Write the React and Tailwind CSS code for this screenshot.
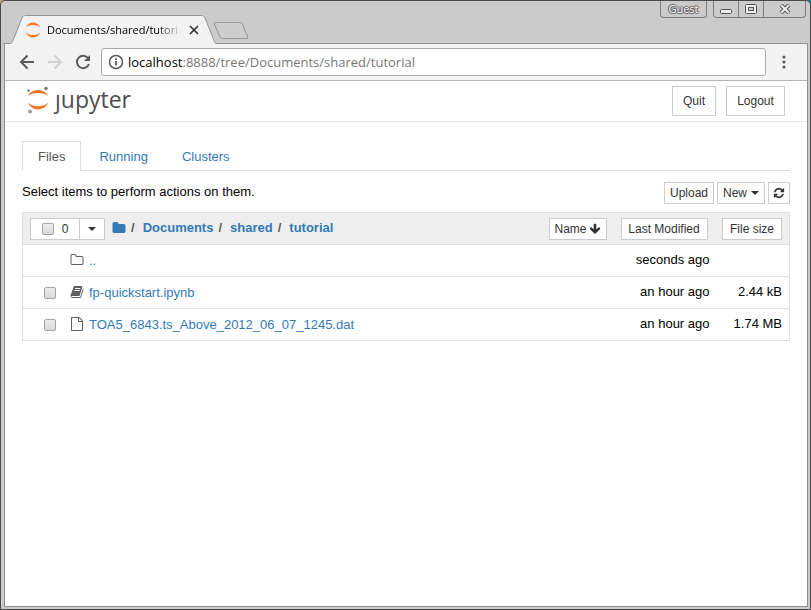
import React from "react";

const FA = {
  folder: "M1728 608v704q0 92-66 158t-158 66h-1216q-92 0-158-66t-66-158v-960q0-92 66-158t158-66h320q92 0 158 66t66 158v32h672q92 0 158 66t66 158z",
  folderOpen: "M1600 1312v-704q0-40-28-68t-68-28h-704q-40 0-68-28t-28-68v-64q0-40-28-68t-68-28h-320q-40 0-68 28t-28 68v960q0 40 28 68t68 28h1216q40 0 68-28t28-68zm128-704v704q0 92-66 158t-158 66h-1216q-92 0-158-66t-66-158v-960q0-92 66-158t158-66h320q92 0 158 66t66 158v32h672q92 0 158 66t66 158z",
  refresh: "M1639 1056q0 5-1 7-64 268-268 434.5t-478 166.5q-146 0-282.5-55t-243.5-157l-129 129q-19 19-45 19t-45-19-19-45v-448q0-26 19-45t45-19h448q26 0 45 19t19 45-19 45l-137 137q71 66 161 102t187 36q134 0 250-65t186-179q11-17 53-117 8-23 30-23h192q13 0 22.5 9.5t9.5 22.5zm25-800v448q0 26-19 45t-45 19h-448q-26 0-45-19t-19-45 19-45l138-138q-148-137-349-137-134 0-250 65t-186 179q-11 17-53 117-8 23-30 23h-199q-13 0-22.5-9.5t-9.5-22.5v-7q65-268 270-434.5t480-166.5q146 0 284 55.5t245 156.5l130-129q19-19 45-19t45 19 19 45z",
  arrowDown: "M1675 832q0 53-37 90l-651 652q-39 37-91 37-53 0-90-37l-651-652q-38-36-38-90 0-53 38-91l74-75q39-37 91-37 53 0 90 37l294 294v-704q0-52 38-90t90-38h128q52 0 90 38t38 90v704l294-294q37-37 90-37 52 0 91 37l75 75q37 39 37 91z",
  file: "M1596 380q28 28 48 76t20 88v1152q0 40-28 68t-68 28h-1344q-40 0-68-28t-28-68v-1600q0-40 28-68t68-28h896q40 0 88 20t76 48zm-444-244v376h376q-10-29-22-41l-313-313q-12-12-41-22zm384 1528v-1024h-416q-40 0-68-28t-28-68v-416h-768v1536h1280z",
  book: "M1703 478q40 57 18 129l-275 906q-19 64-76.5 107.5t-122.5 43.5h-923q-77 0-148.5-53.5t-99.5-131.5q-24-67-2-127 0-4 3-27t4-37q1-8-3-21.5t-3-19.5q2-11 8-21t16.5-23.5 16.5-23.5q23-38 45-91.5t30-91.5q3-10 .5-30t-.5-28q3-11 17-28t17-23q21-36 42-92t25-90q1-9-2.5-32t.5-28q4-13 22-30.5t22-22.5q19-26 42.5-84.5t27.5-96.5q1-8-3-25.5t-2-26.5q2-8 9-18t18-23 17-21q8-12 16.5-30.5t15-35 16-36 19.5-32 26.5-23.5 36-11.5 47.5 5.5l-1 3q38-9 51-9h761q74 0 114 56t18 130l-274 906q-36 119-71.5 153.5t-128.5 34.5h-869q-27 0-38 15-11 16-1 43 24 70 144 70h923q29 0 56-15.5t35-41.5l300-987q7-22 5-57 38 15 59 43zm-1064 2q-4 13 2 22.5t20 9.5h608q13 0 25.5-9.5t16.5-22.5l21-64q4-13-2-22.5t-20-9.5h-608q-13 0-25.5 9.5t-16.5 22.5zm-83 256q-4 13 2 22.5t20 9.5h608q13 0 25.5-9.5t16.5-22.5l21-64q4-13-2-22.5t-20-9.5h-608q-13 0-25.5 9.5t-16.5 22.5z",
};

function Icon({ name, className = "size-[14px]" }) {
  return (
    <svg viewBox="0 0 1792 1792" className={`shrink-0 ${className}`} fill="currentColor" aria-hidden="true">
      <path d={FA[name]} />
    </svg>
  );
}

function Caret() {
  return (
    <svg viewBox="0 0 8 4" className="h-1 w-2 shrink-0" fill="currentColor" aria-hidden="true">
      <path d="M0 0h8L4 4z" />
    </svg>
  );
}

function Crescents({ className }) {
  return (
    <svg viewBox="0 0 16 16" className={className} fill="#f37726" aria-hidden="true">
      <path d="M.8 5.600C2 2.700 4.800.6 8 .6s6 2.100 7.200 5C13.800 4.100 11.200 3 8 3S2.200 4.100.8 5.600z" />
      <path d="M.8 10.400C2 13.300 4.800 15.400 8 15.400s6-2.100 7.200-5C13.800 11.900 11.200 13 8 13S2.200 11.900.8 10.400z" />
    </svg>
  );
}

function TitleBar() {
  return (
    <header className="ml-[2px] mr-[2px] flex h-[43px] shrink-0 items-start justify-between border-b border-[#949494]">
      <div className="flex pl-1 pt-[14px]">
        <div className="relative h-[29px] w-[210px]">
          <svg viewBox="0 0 210 29" className="absolute inset-0 h-full w-full" aria-hidden="true">
            <path d="M2 28.500c3 0 3-1 4-3L15 3c1-2 1.500-2.500 3.500-2.500H194c2 0 3 .5 4 2.500l9 22.500c1 2 1 3 3 3V29H2z" fill="#f2f2f2" />
            <path d="M2 28.500c3 0 3-1 4-3L15 3c1-2 1.500-2.500 3.500-2.500H194c2 0 3 .5 4 2.500l9 22.500c1 2 1 3 3 3" fill="none" stroke="#949494" />
          </svg>
          <div className="relative flex h-full items-center pl-[18px]">
            <Crescents className="size-4 shrink-0" />
            <span className="ml-[6px] w-[136px] whitespace-nowrap font-['Open_Sans','Noto_Sans',sans-serif] text-[11px] leading-4 text-black [mask-image:linear-gradient(to_right,black_110px,transparent_136px)]">
              Documents/shared/tutori
            </span>
            <button aria-label="Close tab" className="ml-[3px] grid size-4 place-items-center">
              <svg viewBox="0 0 10 10" className="size-[10px]" stroke="#333" strokeWidth="1.700" aria-hidden="true">
                <path d="M1 1l8 8M9 1L1 9" />
              </svg>
            </button>
          </div>
        </div>
        <button aria-label="New tab" className="-ml-[4px] mt-[6px] h-[19px] w-9">
          <svg viewBox="0 0 36 19" className="h-full w-full" aria-hidden="true">
            <path d="M3 1.500h24c1.500 0 2 .5 2.500 1.500l5 12.500c.5 1.500 0 2-1.500 2H9.500C8 17.500 7.500 17 7 16L1.500 3.500C1 2 1.500 1.500 3 1.500z" fill="#cdcdcd" stroke="#9c9c9c" strokeWidth="1.200" />
          </svg>
        </button>
      </div>
      <div className="flex pr-[2px]">
        <button className="mr-[6px] h-[17px] w-[47px] rounded-b border border-t-0 border-[#7c7c7c] font-['Open_Sans','Noto_Sans',sans-serif] text-[11px] leading-4 text-white [text-shadow:1px_0_1px_#555,-1px_0_1px_#555,0_1px_1px_#555,0_-1px_1px_#555]">
          Guest
        </button>
        <div className="flex h-[17px] w-[93px] divide-x divide-[#7c7c7c] rounded-b border border-t-0 border-[#7c7c7c]">
          <button aria-label="Minimize" className="grid w-[25px] place-items-center">
            <svg viewBox="0 0 12 10" className="h-[10px] w-3" aria-hidden="true"><rect x=".5" y="5.500" width="11" height="4" rx="1" fill="#eee" stroke="#555" /></svg>
          </button>
          <button aria-label="Maximize" className="grid w-[25px] place-items-center">
            <svg viewBox="0 0 12 10" className="h-[10px] w-3" aria-hidden="true"><rect x=".5" y=".5" width="11" height="9" rx="1" fill="#eee" stroke="#555" /><rect x="3.500" y="3.500" width="5" height="3" fill="#ccc" stroke="#555" /></svg>
          </button>
          <button aria-label="Close" className="grid flex-1 place-items-center">
            <svg viewBox="0 0 12 10" className="h-[10px] w-3" aria-hidden="true"><path d="M2 1l8 8M10 1L2 9" stroke="#555" strokeWidth="4" /><path d="M2.200 1.200l7.600 7.600M9.800 1.200L2.200 8.800" stroke="#eee" strokeWidth="2" /></svg>
          </button>
        </div>
      </div>
    </header>
  );
}

function Toolbar() {
  const nav = "grid size-7 place-items-center";
  return (
    <div className="flex h-[37px] shrink-0 items-center border-b border-[#b5b5b5] bg-[#f2f2f2] pl-2 pr-[11px]">
      <button aria-label="Back" className={nav}>
        <svg viewBox="0 0 16 16" className="size-4" fill="none" stroke="#5a5a5a" strokeWidth="2" aria-hidden="true"><path d="M15 8H2.500M8.500 1.500L2 8l6.500 6.500" /></svg>
      </button>
      <button aria-label="Forward" className={nav}>
        <svg viewBox="0 0 16 16" className="size-4" fill="none" stroke="#d0d0d0" strokeWidth="2" aria-hidden="true"><path d="M1 8h12.500M7.500 1.500L14 8l-6.500 6.500" /></svg>
      </button>
      <button aria-label="Reload" className={nav}>
        <svg viewBox="0 0 16 16" className="size-4" aria-hidden="true"><path d="M13.300 4.500A6.200 6.200 0 1 0 14 10" fill="none" stroke="#5a5a5a" strokeWidth="2" /><path d="M15 1v6H9z" fill="#5a5a5a" /></svg>
      </button>
      <div className="ml-1 flex h-7 flex-1 items-center rounded-[3px] border border-[#a9a9a9] bg-white pl-[6px]">
        <svg viewBox="0 0 16 16" className="size-4" aria-hidden="true"><circle cx="8" cy="8" r="6.500" fill="none" stroke="#5a5a5a" strokeWidth="1.500" /><path d="M7.100 7h1.800v4.500H7.100zM7.100 4.200h1.800v1.700H7.100z" fill="#5a5a5a" /></svg>
        <span className="ml-1 font-['Open_Sans','Noto_Sans',sans-serif] text-[13px] leading-5 text-[#777]">
          <span className="text-black">localhost</span>:8888/tree/Documents/shared/tutorial
        </span>
      </div>
      <button aria-label="Menu" className="ml-[6px] grid h-7 w-6 place-items-center">
        <svg viewBox="0 0 4 14" className="h-[14px] w-1" fill="#5a5a5a" aria-hidden="true"><circle cx="2" cy="2" r="1.600" /><circle cx="2" cy="7" r="1.600" /><circle cx="2" cy="12" r="1.600" /></svg>
      </button>
    </div>
  );
}

function JupyterHeader() {
  const button = "h-[30px] border border-[#ccc] bg-white text-[12px] leading-[18px] text-[#333]";
  return (
    <div className="flex h-[41px] items-center justify-between border-b border-[#e7e7e7] pl-[21px] pr-[22px]">
      <a href="#home" className="flex items-center pb-1" aria-label="jupyter">
        <svg viewBox="0 0 24 30" className="h-[30px] w-6" aria-hidden="true">
          <path d="M2 12.200C3.500 8.300 7.400 6 12 6s8.500 2.300 10 6.200C19.800 10 16.200 9 12 9s-7.800 1-10 3.200z" fill="#f37726" />
          <path d="M2 18.800C3.500 22.700 7.400 25.500 12 25.500s8.500-2.800 10-6.700c-2.200 2.200-5.800 3.400-10 3.400s-7.800-1.200-10-3.400z" fill="#f37726" />
          <circle cx="20" cy="4.500" r="1.700" fill="#767677" /><circle cx="2.500" cy="6.500" r="1.200" fill="#767677" /><circle cx="4" cy="27.500" r="2" fill="#9e9e9e" />
        </svg>
        <span className="ml-[5px] font-['Open_Sans','Noto_Sans',sans-serif] text-[23px] leading-7 text-[#4e4e4e]">ȷupyter</span>
      </a>
      <div className="flex gap-[10px]">
        <button className={`${button} w-11`}>Quit</button>
        <button className={`${button} w-[59px]`}>Logout</button>
      </div>
    </div>
  );
}

const small = "flex h-[22px] items-center justify-center border border-[#ccc] bg-white text-[12px] leading-[18px] text-[#333]";
const check = "appearance-none size-3 shrink-0 rounded-[2px] border border-[#a3a3a3] bg-linear-to-b from-[#ececec] to-[#d9d9d9] checked:bg-[#337ab7]";
const tab = "-mb-px border pb-[3px] pt-[5px]";

const files = [
  { name: "..", icon: "folderOpen", modified: "seconds ago", size: "" },
  { name: "fp-quickstart.ipynb", icon: "book", modified: "an hour ago", size: "2.44 kB" },
  { name: "TOA5_6843.ts_Above_2012_06_07_1245.dat", icon: "file", modified: "an hour ago", size: "1.74 MB" },
];

function FileTable() {
  return (
    <table className="w-full border-collapse border border-[#ddd]">
      <thead>
        <tr className="h-8 bg-[#eee]">
          <th className="p-0 pl-[7px] text-left">
            <div className="flex items-center">
              <label className={`${small} w-[50px] gap-2 font-normal`}>
                <input type="checkbox" aria-label="Select all" className={check} />0
              </label>
              <button aria-label="Selection menu" className={`${small} -ml-px w-[26px]`}><Caret /></button>
              <nav className="ml-[7px] flex items-center pb-[2px] text-[13px] font-bold leading-5 text-[#337ab7]">
                <a href="#root" aria-label="Root"><Icon name="folder" /></a>
                {["Documents", "shared", "tutorial"].map((p) => (
                  <React.Fragment key={p}>
                    <span className="ml-[5px] mr-2 text-[#5e5e5e]">/</span>
                    <a href={`#${p}`}>{p}</a>
                  </React.Fragment>
                ))}
              </nav>
            </div>
          </th>
          <th className="w-[175px] p-0 pr-[2px] font-normal">
            <div className="flex justify-end gap-[14px]">
              <button className={`${small} w-[58px] gap-[2px]`}>Name<Icon name="arrowDown" className="size-3" /></button>
              <button className={`${small} w-[87px]`}>Last Modified</button>
            </div>
          </th>
          <th className="w-[80px] p-0 pr-[7px] font-normal">
            <button className={`${small} ml-auto w-[60px]`}>File size</button>
          </th>
        </tr>
      </thead>
      <tbody>
        {files.map((f) => (
          <tr key={f.name} className="h-8 border-t border-[#ddd] text-[13px] leading-5 text-black">
            <td className="p-0 pl-[21px]">
              <div className="flex items-center">
                {f.size ? <input type="checkbox" aria-label={`Select ${f.name}`} className={check} /> : <span className="w-3" />}
                <Icon name={f.icon} className="mb-[2px] ml-[14px] size-[14px] text-[#5e5e5e]" />
                <a href={`#${f.name}`} className="ml-[5px] text-[#337ab7]">{f.name}</a>
              </div>
            </td>
            <td className="p-0 pb-[2px] text-right">{f.modified}</td>
            <td className="p-0 pb-[2px] pr-[7px] text-right">{f.size}</td>
          </tr>
        ))}
      </tbody>
    </table>
  );
}

export default function App() {
  return (
    <div className="bg-linear-to-r from-[#b9a58c] to-[#007f9f]">
      <div className="flex min-h-screen flex-col rounded-t-[5px] border border-[#4a4a4a] bg-[#cbcbcb] font-['Liberation_Sans',Arial,sans-serif]">
        <TitleBar />
        <div className="mb-[2px] ml-[3px] mr-[2px] flex flex-1 flex-col border border-t-0 border-[#8f8f8f] bg-white">
          <Toolbar />
          <JupyterHeader />
          <main className="px-[17px] pt-[19px]">
            <nav className="flex border-b border-[#ddd] text-[13px] leading-5">
              <a href="#files" className={`${tab} border-[#ddd] border-b-white px-[15px] text-[#555]`}>Files</a>
              <a href="#running" className={`${tab} border-transparent px-[17px] text-[#337ab7]`}>Running</a>
              <a href="#clusters" className={`${tab} border-transparent px-[15px] text-[#337ab7]`}>Clusters</a>
            </nav>
            <div className="flex items-start justify-between pb-2 pt-[11px]">
              <p className="text-[13px] leading-5 text-black">Select items to perform actions on them.</p>
              <div className="flex gap-[3px]">
                <button className={`${small} w-[50px]`}>Upload</button>
                <button className={`${small} w-12 gap-1`}>New<Caret /></button>
                <button aria-label="Refresh" className={`${small} w-[22px]`}><Icon name="refresh" className="size-3" /></button>
              </div>
            </div>
            <FileTable />
          </main>
        </div>
      </div>
    </div>
  );
}
